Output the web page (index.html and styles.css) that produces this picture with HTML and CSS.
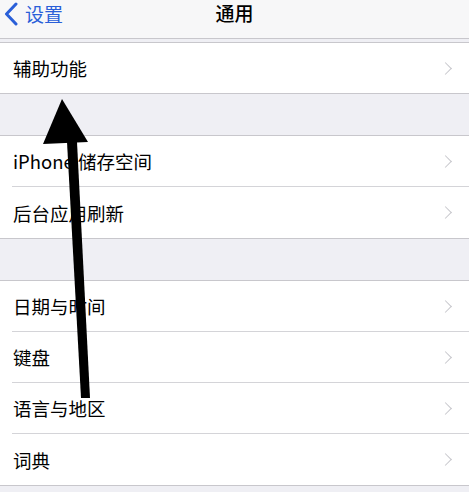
FILE: index.html
```html
<!DOCTYPE html>
<html lang="zh">
<head>
<meta charset="utf-8">
<link rel="stylesheet" href="styles.css">
</head>
<body>
<div class="screen">
  <header class="nav">
    <div class="back">
      <svg class="back-icon" width="14" height="24" viewBox="0 0 14 24"><path d="M12 2 L2.5 12 L12 22" fill="none" stroke="#2a5fd8" stroke-width="3" stroke-linecap="round" stroke-linejoin="round"/></svg>
      <span>设置</span>
    </div>
    <div class="title">通用</div>
  </header>

  <section class="group first">
    <div class="row"><span>辅助功能</span><i class="chev"></i></div>
  </section>

  <section class="group">
    <div class="row"><span>iPhone 储存空间</span><i class="chev"></i></div>
    <div class="row"><span>后台应用刷新</span><i class="chev"></i></div>
  </section>

  <section class="group">
    <div class="row"><span>日期与时间</span><i class="chev"></i></div>
    <div class="row"><span>键盘</span><i class="chev"></i></div>
    <div class="row"><span>语言与地区</span><i class="chev"></i></div>
    <div class="row"><span>词典</span><i class="chev"></i></div>
  </section>

  <svg class="arrow" width="469" height="492" viewBox="0 0 469 492">
    <polygon points="62,99 43,144 88,142" fill="#000"/>
    <polygon points="67,142 77,142 90,398 81,398" fill="#000"/>
  </svg>
</div>
</body>
</html>
```

FILE: styles.css
```css
* { box-sizing: border-box; }
html, body { margin: 0; padding: 0; }
body {
  background: #efeff4;
  font-family: "Noto Sans CJK SC", "Noto Sans", sans-serif;
  color: #000;
}
.screen {
  position: relative;
  width: 469px;
  height: 492px;
  overflow: hidden;
  background: #efeff4;
}
.nav {
  position: relative;
  height: 39px;
  background: #f7f7f8;
  border-bottom: 1px solid #c8c7cc;
  display: flex;
  align-items: center;
}
.back {
  display: flex;
  align-items: center;
  gap: 7px;
  padding-left: 4px;
  margin-top: -10px;
  color: #2a5fd8;
  font-size: 19px;
  line-height: 24px;
}
.back-icon { display: block; }
.title {
  position: absolute;
  left: 0;
  right: 0;
  top: 1px;
  text-align: center;
  font-size: 19px;
  line-height: 24px;
  font-weight: 500;
}
.group {
  background: #fff;
  border-top: 1px solid #c8c7cc;
  border-bottom: 1px solid #c8c7cc;
  margin-top: 41px;
}
.group.first { margin-top: 3px; }
.row {
  height: 51px;
  margin-left: 12px;
  padding-left: 1px;
  padding-right: 17px;
  display: flex;
  align-items: center;
  justify-content: space-between;
  border-bottom: 1px solid #d4d4d8;
  font-size: 18.5px;
}
.row:last-child {
  height: 51px;
  border-bottom: none;
}
.group.first .row:last-child { height: 50px; }
.chev {
  width: 9px;
  height: 9px;
  border-top: 1.6px solid #c7c7cc;
  border-right: 1.6px solid #c7c7cc;
  transform: rotate(45deg);
  margin-right: 2px;
}
.arrow {
  position: absolute;
  left: 0;
  top: 0;
  pointer-events: none;
}
```
